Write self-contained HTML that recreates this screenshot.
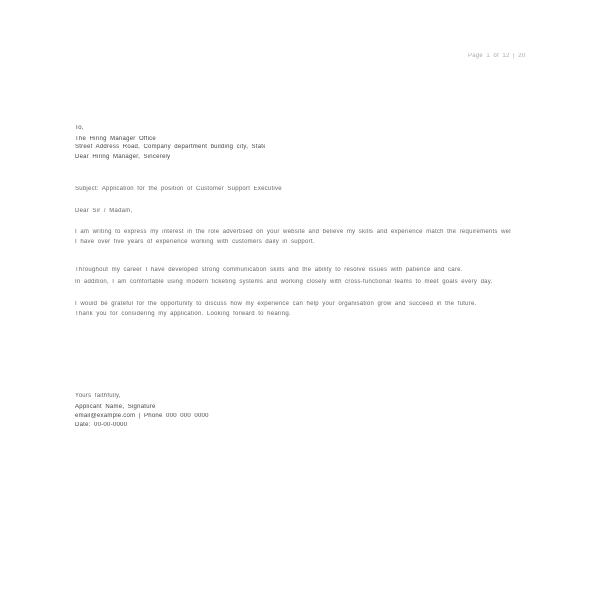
<!DOCTYPE html>
<html><head><meta charset="utf-8"><style>
html,body{margin:0;padding:0;background:#fff;width:600px;height:600px;overflow:hidden}
.l{position:absolute;font-family:"Liberation Sans",sans-serif;font-size:6px;line-height:7px;color:#666;white-space:nowrap;overflow:hidden;letter-spacing:0.25px;word-spacing:1.5px}
.d{color:#444}
.f{color:#aaa}
</style></head><body>
<div class="l f" style="left:468px;top:53px;width:58px">Page 1 of 12 | 2024 © </div>
<div class="l d" style="left:75px;top:125px;width:12px">To,</div>
<div class="l d" style="left:75px;top:136px;width:88px">The Hiring Manager Office</div>
<div class="l d" style="left:75px;top:144px;width:190px">Street Address Road, Company department building city, State 00000</div>
<div class="l d" style="left:75px;top:154px;width:98px">Dear Hiring Manager, Sincerely</div>
<div class="l" style="left:75px;top:186px;width:272px">Subject: Application for the position of Customer Support Executive</div>
<div class="l" style="left:75px;top:208px;width:86px">Dear Sir / Madam,</div>
<div class="l" style="left:75px;top:229px;width:436px">I am writing to express my interest in the role advertised on your website and believe my skills and experience match the requirements well.</div>
<div class="l" style="left:75px;top:239px;width:268px">I have over five years of experience working with customers daily in support.</div>
<div class="l" style="left:75px;top:267px;width:420px">Throughout my career I have developed strong communication skills and the ability to resolve issues with patience and care.</div>
<div class="l" style="left:75px;top:279px;width:436px">In addition, I am comfortable using modern ticketing systems and working closely with cross-functional teams to meet goals every day.</div>
<div class="l" style="left:75px;top:301px;width:432px">I would be grateful for the opportunity to discuss how my experience can help your organisation grow and succeed in the future.</div>
<div class="l" style="left:75px;top:311px;width:244px">Thank you for considering my application. Looking forward to hearing.</div>
<div class="l" style="left:75px;top:393px;width:78px">Yours faithfully,</div>
<div class="l d" style="left:75px;top:404px;width:104px">Applicant Name, Signature</div>
<div class="l d" style="left:75px;top:413px;width:146px">email@example.com | Phone 000 000 0000</div>
<div class="l d" style="left:75px;top:422px;width:62px">Date: 00-00-0000</div>
</body></html>
